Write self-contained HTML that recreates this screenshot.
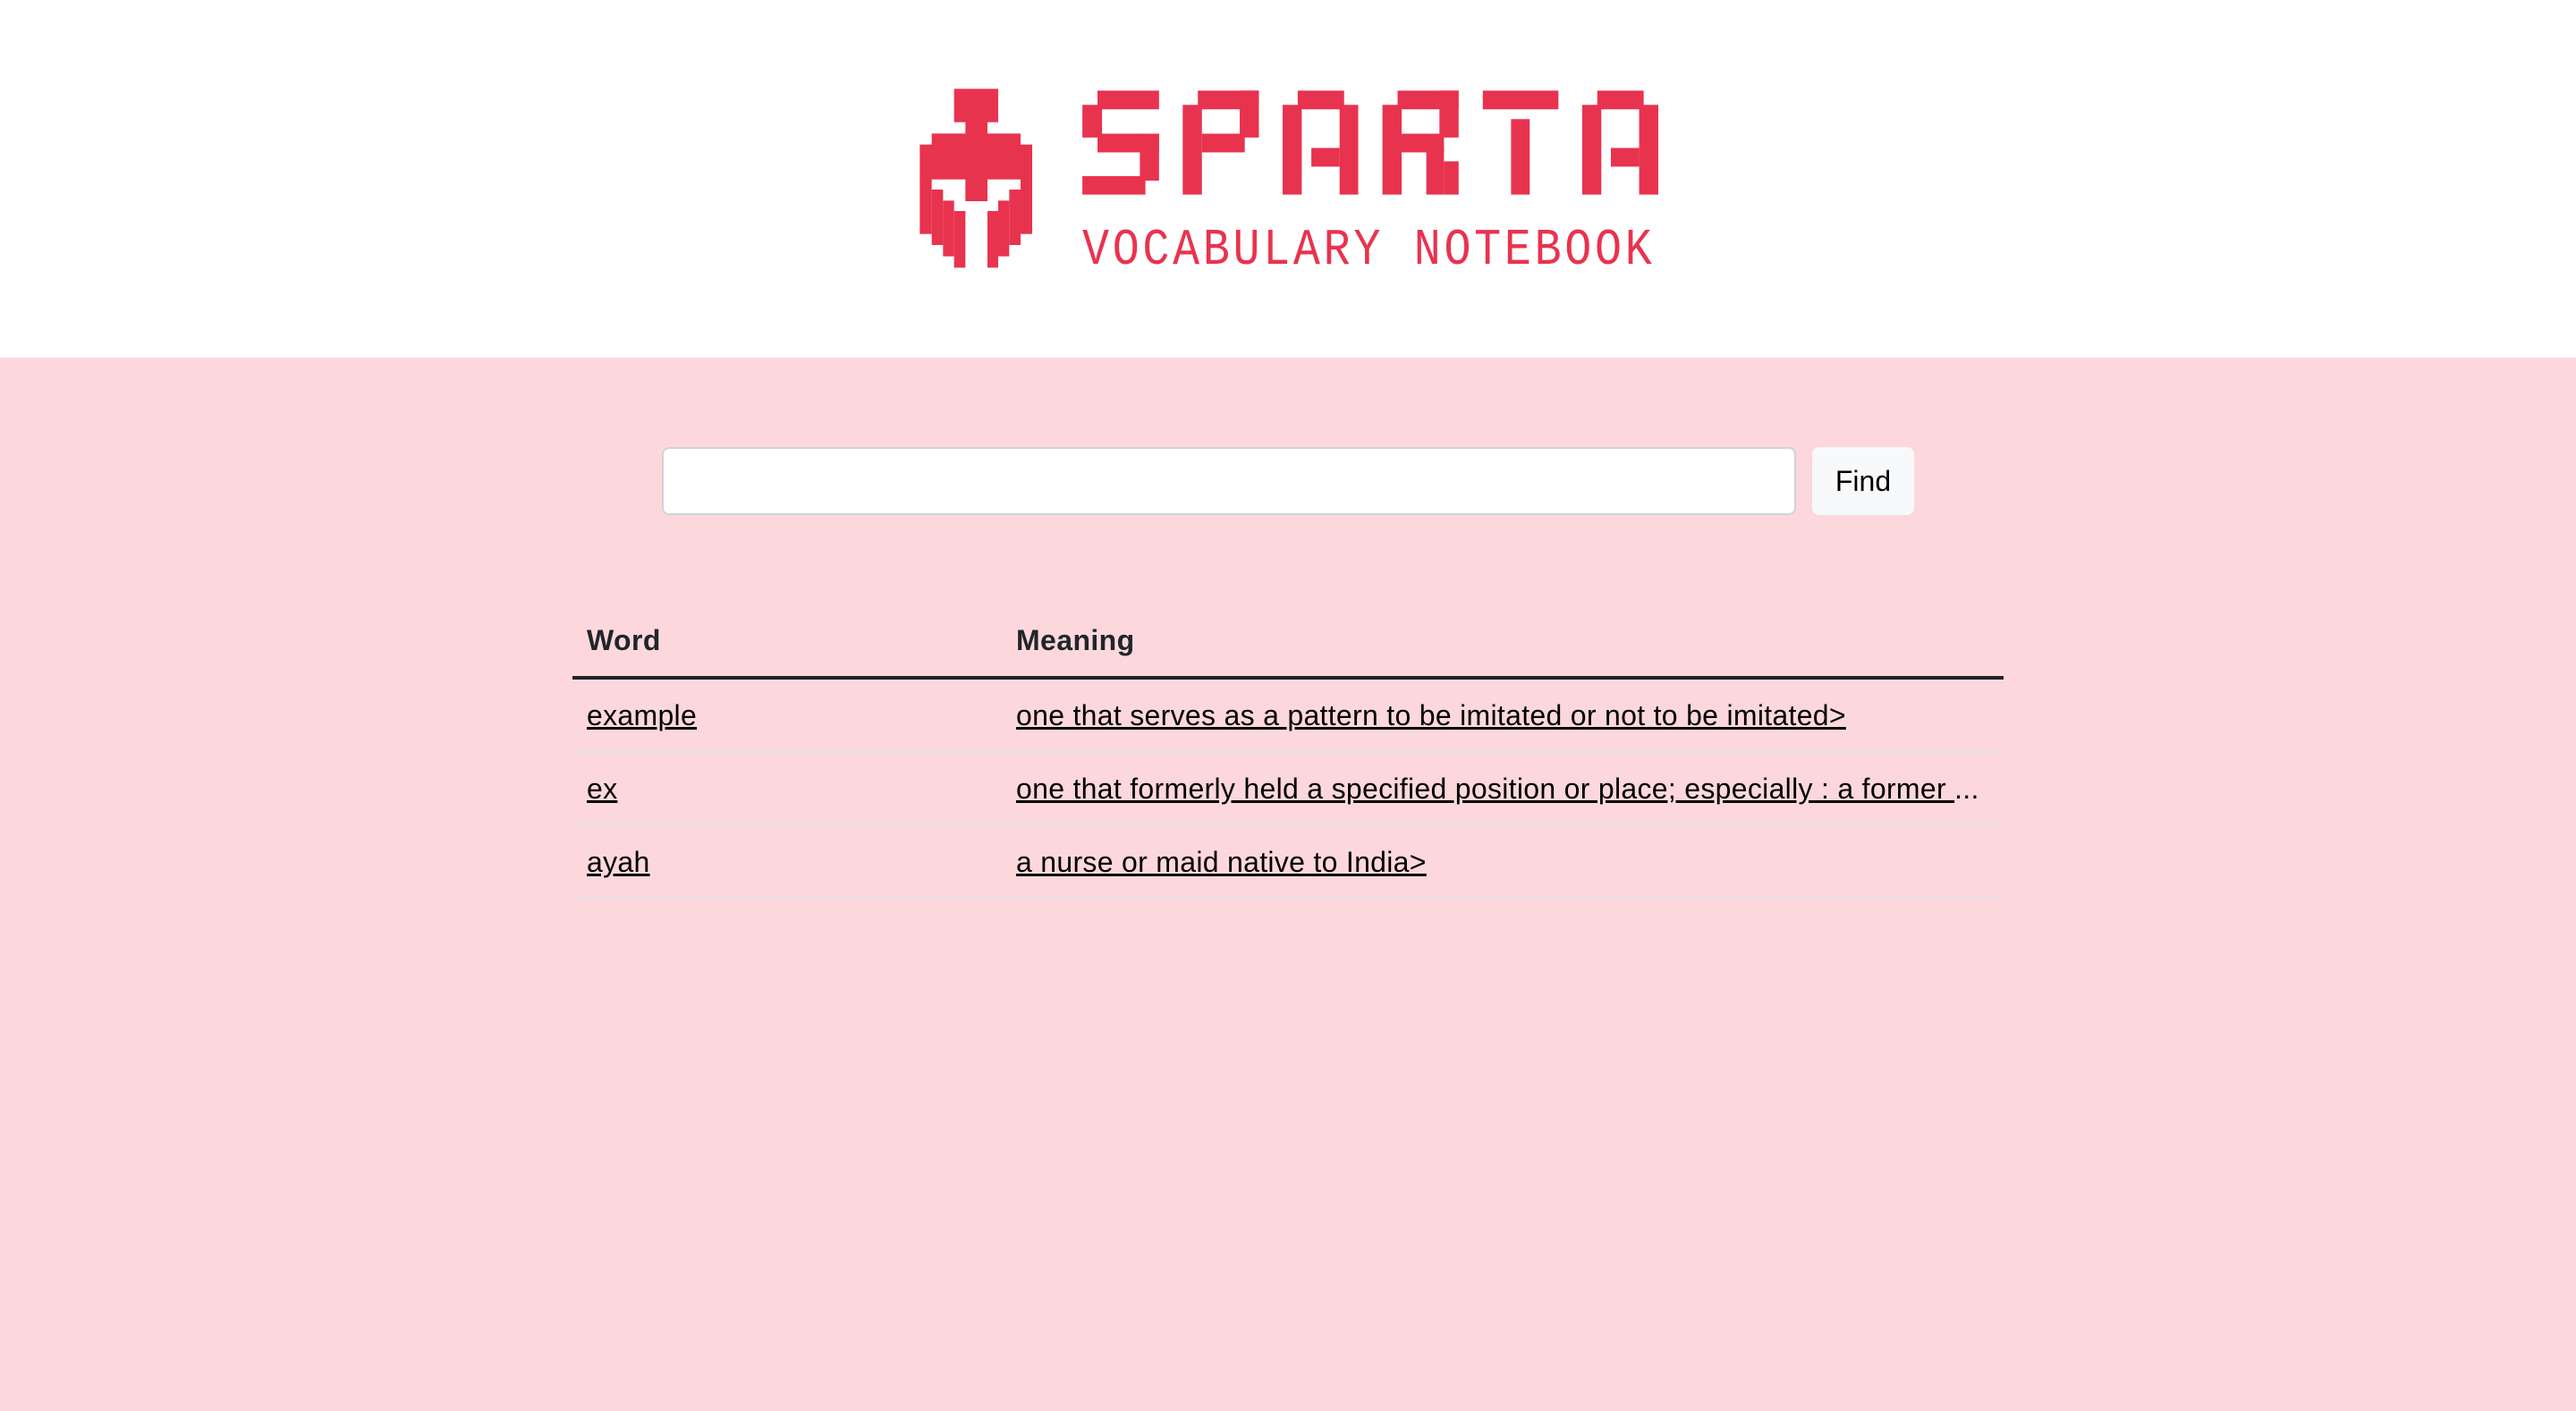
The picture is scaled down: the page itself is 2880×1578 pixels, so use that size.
<!DOCTYPE html>
<html><head><meta charset="utf-8"><style>
html{zoom:2}
body{margin:0;width:1440px;height:789px;background:#fcd8dd;font-family:"Liberation Sans",sans-serif;position:relative;overflow:hidden}
.hdr{position:absolute;left:0;top:0;width:1440px;height:200px;background:#fff}
.logo{position:absolute;left:514px;top:50px;width:413px;height:100px}
.helm{position:absolute;left:505px;top:45px;width:150px;height:110px}
.sub{position:absolute;left:605px;top:124px;font-family:"Liberation Mono",monospace;font-weight:normal;font-size:25px;color:#e8334f;letter-spacing:1.85px;transform:scaleY(1.15);transform-origin:left top;white-space:nowrap}
.inp{position:absolute;left:370px;top:250px;width:632px;height:36px;background:#fff;border:1px solid #ced4da;border-radius:4px}
.btn{position:absolute;left:1013px;top:250px;width:57px;height:38px;background:#f8f9fa;border-radius:4px;font-size:16px;line-height:38px;text-align:center;color:#000}
table{position:absolute;left:320px;top:338px;width:800px;border-collapse:collapse;font-size:16px}
th{text-align:left;font-weight:bold;color:#212529;padding:8px;line-height:24px;border-bottom:2px solid #212529;letter-spacing:.2px}
td{padding:8px;line-height:24px;border-bottom:1px solid #dee2e6;white-space:nowrap;letter-spacing:.15px}
td a{color:#000;text-decoration:underline}
.c1{width:224px}
</style></head><body>
<div class="hdr">
<svg class="helm" viewBox="0 0 900 660" preserveAspectRatio="none" fill="#e8334f">
<rect x="170" y="28" width="148" height="112"/><rect x="208" y="138" width="74" height="42"/><rect x="95" y="178" width="298" height="39"/><rect x="55" y="215" width="377" height="117"/>
<rect x="55" y="330" width="40" height="185"/><rect x="95" y="366" width="38" height="186"/><rect x="133" y="403" width="37" height="187"/><rect x="170" y="438" width="38" height="190"/>
<rect x="393" y="330" width="39" height="185"/><rect x="355" y="366" width="38" height="186"/><rect x="318" y="403" width="37" height="187"/><rect x="282" y="438" width="36" height="190"/>
<rect x="208" y="330" width="74" height="75"/>
</svg>
<svg class="logo" viewBox="35 58 1465 602" preserveAspectRatio="none" fill="#e8334f">
<rect x="388" y="62" width="122" height="63"/><rect x="358" y="110" width="39" height="110"/><rect x="388" y="207" width="122" height="63"/><rect x="472" y="207" width="38" height="158"/><rect x="358" y="350" width="125" height="62"/>
<rect x="587" y="62" width="121" height="63"/><rect x="557" y="110" width="38" height="302"/><rect x="670" y="62" width="38" height="158"/><rect x="595" y="207" width="85" height="63"/>
<rect x="785" y="62" width="92" height="63"/><rect x="755" y="110" width="38" height="302"/><rect x="868" y="110" width="37" height="302"/><rect x="812" y="255" width="56" height="63"/>
<rect x="983" y="62" width="121" height="63"/><rect x="953" y="110" width="38" height="302"/><rect x="1066" y="62" width="38" height="158"/><rect x="991" y="207" width="84" height="63"/><rect x="1040" y="255" width="35" height="157"/><rect x="1075" y="300" width="29" height="112"/>
<rect x="1152" y="62" width="150" height="63"/><rect x="1208" y="158" width="37" height="254"/>
<rect x="1379" y="62" width="92" height="63"/><rect x="1349" y="110" width="38" height="302"/><rect x="1462" y="110" width="38" height="302"/><rect x="1406" y="255" width="56" height="63"/>
</svg>
<div class="sub">VOCABULARY NOTEBOOK</div>
</div>
<div class="inp"></div>
<div class="btn">Find</div>
<table>
<tr><th class="c1">Word</th><th>Meaning</th></tr>
<tr><td><a>example</a></td><td><a>one that serves as a pattern to be imitated or not to be imitated&gt;</a></td></tr>
<tr><td><a>ex</a></td><td><a>one that formerly held a specified position or place; especially : a former </a>...</td></tr>
<tr><td><a>ayah</a></td><td><a>a nurse or maid native to India&gt;</a></td></tr>
</table>
</body></html>
